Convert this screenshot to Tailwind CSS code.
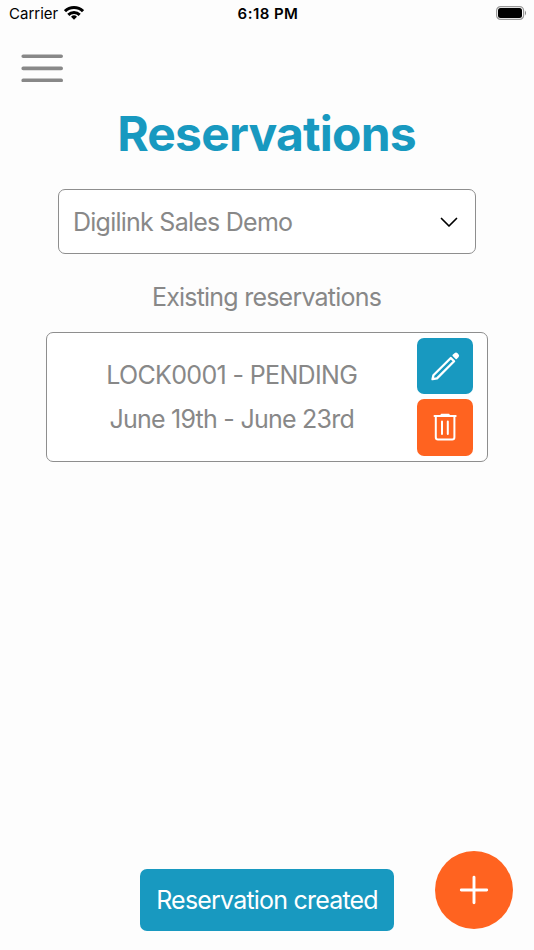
<!DOCTYPE html>
<html lang="en"><head><meta charset="utf-8"><title>Reservations</title>
<script src="https://cdn.jsdelivr.net/npm/@tailwindcss/browser@4"></script></head>
<body class="bg-[#fdfdfd]">
<div class="relative w-[534px] h-[950px] overflow-hidden bg-[#fdfdfd] font-[Inter,sans-serif] text-[#888] whitespace-nowrap">
<header class="grid grid-cols-[1fr_64px_1fr] items-center h-7 pl-[9px] pr-[7px] text-black text-[15px]">
<div class="flex items-center gap-[5px]"><span class="w-[50px]">Carrier</span>
<svg class="w-5 h-[14px] -mt-[2px]" viewBox="0 0 20 14" fill="none" stroke="#000" stroke-width="3"><path d="M1 5.200a13 13 0 0 1 18 0M4.300 8.900a8.200 8.200 0 0 1 11.400 0"/><path d="M10 13.800l-3-3a4.300 4.300 0 0 1 6 0z" fill="#000" stroke="none"/></svg></div>
<span class="text-center font-semibold tracking-[0.45px]">6:18 PM</span>
<svg class="relative -top-px justify-self-end w-[31px] h-[14px]" viewBox="0 0 31 14"><rect x=".6" y=".6" width="27" height="12.800" rx="4" fill="none" stroke="#999" stroke-width="1.200"/><rect x="2" y="2" width="24" height="10" rx="2.500"/><path d="M29 4.500q2 2.500 0 5z" fill="#888"/></svg>
</header>
<main class="flex flex-col">
<button class="self-start ml-[21px] mt-[26px] w-[42px] h-[28px]" aria-label="Menu"><svg class="w-[42px] h-[28px]" viewBox="0 0 42 28" stroke="#888" stroke-width="3.600" stroke-linecap="round"><path d="M2.200 2.200h38M2.200 14.400h38M2.200 26.400h38"/></svg></button>
<h1 class="mt-[22px] h-[60px] leading-[60px] text-center font-bold text-[48px] tracking-[-0.8px] text-[#1899c0] -ml-px">Reservations</h1>
<div class="mt-[25px] mx-[58px] h-[65px] border-[1.500px] border-[#8e8e8e] bg-white rounded-[7px] flex items-center justify-between pl-[14px] pr-[17px] text-[25px]"><span class="relative top-px tracking-[-0.75px]">Digilink Sales Demo</span><svg class="relative top-px w-[18px] h-[11px]" viewBox="0 0 18 11" fill="none" stroke="#000" stroke-width="1.700" stroke-linecap="round" stroke-linejoin="round"><path d="M1.500 1.500L9 9l7.500-7.500"/></svg></div>
<h2 class="mt-[23px] h-10 leading-10 text-center text-[25px] tracking-[-0.78px] -ml-px">Existing reservations</h2>
<section class="mt-[15px] mx-[46px] h-[130px] border-[1.500px] border-[#8e8e8e] bg-white rounded-[7px] flex">
<div class="w-[369.500px] pt-[20px] text-center text-[25px] leading-[44px]"><p class="tracking-[-0.65px]">LOCK0001 - PENDING</p><p class="tracking-[-0.75px]">June 19th - June 23rd</p></div>
<div class="flex flex-col gap-[5px] pt-[4.500px]">
<button class="size-[56.500px] rounded-[7px] bg-[#1899c0]" aria-label="Edit"><svg class="size-[56px]" viewBox="0 0 56 56" fill="none" stroke="#fff" stroke-width="2.300" stroke-linejoin="round"><path d="M33.800 20L37.100 23.300L20 40.400L15.500 41.200L16.400 37.200Z"/><path d="M36.200 17.400L38 15.700Q39 14.800 40 15.700L40.900 16.700Q41.800 17.700 40.900 18.700L39.200 20.400Z" fill="#fff" stroke-width="1.500"/></svg></button>
<button class="size-[56.500px] rounded-[7px] bg-[#ff6320]" aria-label="Delete"><svg class="size-[56px]" viewBox="0 0 56 56" fill="none" stroke="#fff" stroke-width="2" stroke-linecap="round" stroke-linejoin="round"><path d="M18.800 17.500V38.300Q18.800 40.500 21 40.500H35.200Q37.400 40.500 37.400 38.300V17.500"/><path d="M17.500 17H38.700M24.500 15.700H31.700"/><path d="M25 22.500V35M30.800 22.500V35"/></svg></button></div></section>
</main>
<div class="absolute left-[140px] top-[869px] w-[254px] h-[62px] rounded-[7px] bg-[#1899c0] text-white text-center text-[25px] tracking-[-0.8px] leading-[62px]">Reservation created</div>
<button class="absolute left-[435px] top-[851px] size-[78px] rounded-full bg-[#ff6320]" aria-label="Add reservation"><svg class="size-[78px]" viewBox="0 0 78 78" stroke="#fff" stroke-width="2.900" stroke-linecap="round"><path d="M26.300 39H51.700M39 26.300V51.700"/></svg></button>
</div></body></html>
